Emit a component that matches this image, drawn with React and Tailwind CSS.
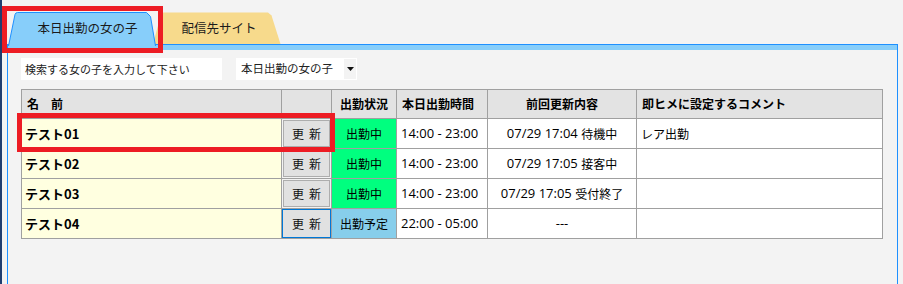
import React from "react";

const font = { fontFamily: '"Noto Sans CJK JP", "Noto Sans", sans-serif' };

const rows = [
  { name: "テスト01", status: "出勤中", time: "14:00 - 23:00", prev: ["07/29 17:04 ", "待機中"], comment: "レア出勤", focused: false },
  { name: "テスト02", status: "出勤中", time: "14:00 - 23:00", prev: ["07/29 17:05 ", "接客中"], comment: "", focused: false },
  { name: "テスト03", status: "出勤中", time: "14:00 - 23:00", prev: ["07/29 17:05 ", "受付終了"], comment: "", focused: false },
  { name: "テスト04", status: "出勤予定", time: "22:00 - 05:00", prev: ["---", ""], comment: "", focused: true },
];

function HeaderCell({ children, className = "" }) {
  return (
    <div className={"h-[29px] border-r border-b border-[#a0a0a0] bg-[#e3e3e3] flex items-center text-[12px] font-bold text-black " + className}>
      {children}
    </div>
  );
}

export default function App() {
  return (
    <div className="relative w-[903px] h-[284px] overflow-hidden bg-[#f3f3f3] flex" style={font}>
      <div className="w-[2px] shrink-0 bg-[#1f3d70]" />
      <div className="flex-1 flex flex-col pl-[5px] pr-[5px] pt-[12px]">
        {/* tabs */}
        <div className="h-[32px] flex items-start shrink-0">
          <div className="relative z-10 w-[149px] h-[34px] shrink-0">
            <svg className="absolute inset-0" width="149" height="34" viewBox="0 0 149 34">
              <path d="M1.5 34 L8 2.5 Q8.6 0.5 10.5 0.5 L139.5 0.5 L143.5 4.5 L148.5 34" fill="#87cefa" stroke="#1e90ff" strokeWidth="1" />
            </svg>
            <div className="relative h-[32px] flex items-center justify-center pl-[12px] text-[12.5px] text-[#1b1b1b]">
              本日出勤の女の子
            </div>
          </div>
          <div className="relative -ml-[6px] w-[131px] h-[32px] shrink-0">
            <svg className="absolute inset-0" width="131" height="32" viewBox="0 0 131 32">
              <path d="M3 32 L11 2.5 Q11.7 0.5 13.5 0.5 L118 0.5 L121.5 3.5 L130.5 32 Z" fill="#f7da8c" />
            </svg>
            <div className="relative h-[32px] flex items-center justify-center pl-[7px] text-[12.5px] text-[#1b1b1b]">
              配信先サイト
            </div>
          </div>
        </div>
        {/* panel */}
        <div className="flex-1 flex flex-col border-x border-t border-[#1e90ff]">
          <div className="h-[5px] bg-[#87cefa] shrink-0" />
          <div className="flex-1 pl-[13px] pt-[8px]">
            <div className="flex items-center gap-[14px] h-[22px]">
              <div className="w-[201px] h-[22px] bg-white flex items-center pl-[4px] text-[11px] text-[#222]">
                検索する女の子を入力して下さい
              </div>
              <div className="w-[121px] h-[22px] bg-white flex items-center">
                <div className="flex-1 pl-[5px] text-[11.5px] text-[#222]">本日出勤の女の子</div>
                <div className="w-[12px] h-[20px] bg-[#f3f3f3] flex items-center justify-center mr-[1px]">
                  <svg width="7" height="4" viewBox="0 0 7 4"><path d="M0 0 H7 L3.5 4 Z" fill="#111" /></svg>
                </div>
              </div>
            </div>
            <div className="mt-[9px] w-[862px] grid grid-cols-[260px_50px_65px_91px_149px_246px] border-l border-t border-[#a0a0a0]">
              <HeaderCell className="pl-[5px]">名　前</HeaderCell>
              <HeaderCell />
              <HeaderCell className="justify-center">出勤状況</HeaderCell>
              <HeaderCell className="pl-[5px]">本日出勤時間</HeaderCell>
              <HeaderCell className="justify-center">前回更新内容</HeaderCell>
              <HeaderCell className="pl-[5px]">即ヒメに設定するコメント</HeaderCell>
              {rows.map((r) => (
                <React.Fragment key={r.name}>
                  <div className="h-[30px] border-r border-b border-[#a0a0a0] bg-[#ffffe0] flex items-center pl-[3px] text-[13px] font-bold text-black">
                    {r.name}
                  </div>
                  <div className={"h-[30px] border-r border-b border-[#a0a0a0] bg-[#f3f3f3] flex " + (r.focused ? "p-0" : "p-[1px]")}>
                    <div className={"flex-1 flex items-center justify-center gap-[5px] bg-[#e1e1e1] text-[12px] text-[#111] border " + (r.focused ? "border-[#0078d7]" : "border-[#adadad]")}>
                      <span>更</span>
                      <span>新</span>
                    </div>
                  </div>
                  <div className={"h-[30px] border-r border-b border-[#a0a0a0] flex items-center justify-center text-[12px] text-black " + (r.focused ? "bg-[#87ceeb]" : "bg-[#00ff7f]")}>
                    {r.status}
                  </div>
                  <div className="h-[30px] border-r border-b border-[#a0a0a0] bg-white flex items-center pl-[4px] text-[13px] text-black" style={{ fontFamily: '"Open Sans", "Noto Sans CJK JP", sans-serif' }}>
                    {r.time}
                  </div>
                  <div className="h-[30px] border-r border-b border-[#a0a0a0] bg-white flex items-center justify-center text-[13px] text-black whitespace-pre" style={{ fontFamily: '"Open Sans", "Noto Sans CJK JP", sans-serif' }}>
                    {r.prev[0]}
                    <span className="text-[12px]" style={font}>{r.prev[1]}</span>
                  </div>
                  <div className="h-[30px] border-r border-b border-[#a0a0a0] bg-white flex items-center pl-[4px] text-[12px] text-black">
                    {r.comment}
                  </div>
                </React.Fragment>
              ))}
            </div>
          </div>
        </div>
      </div>
      {/* red highlight boxes */}
      <div className="absolute left-[2px] top-[6px] w-[161px] h-[47px] border-[5px] border-[#ed1c24] z-20 pointer-events-none" />
      <div className="absolute left-[17px] top-[113px] w-[318px] h-[39px] border-[5px] border-[#ed1c24] z-20 pointer-events-none" />
    </div>
  );
}
